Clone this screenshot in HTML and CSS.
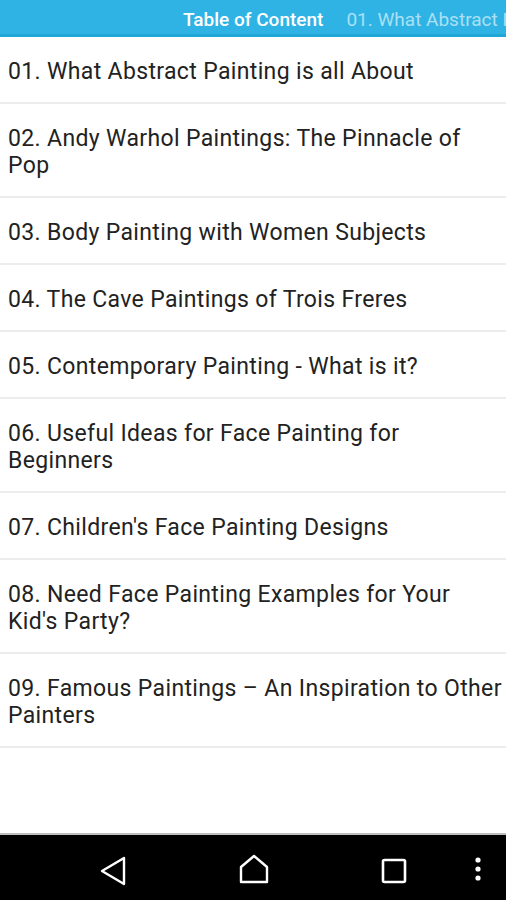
FILE: index.html
```html
<!DOCTYPE html>
<html>
<head>
<meta charset="utf-8">
<link rel="stylesheet" href="styles.css">
</head>
<body>
<div class="app">
  <header class="tabs">
    <span class="tab active">Table of Content</span>
    <span class="tab">01. What Abstract Painting is all About</span>
  </header>
  <ul class="list">
    <li>01. What Abstract Painting is all About</li>
    <li>02. Andy Warhol Paintings: The Pinnacle of Pop</li>
    <li>03. Body Painting with Women Subjects</li>
    <li>04. The Cave Paintings of Trois Freres</li>
    <li>05. Contemporary Painting - What is it?</li>
    <li>06. Useful Ideas for Face Painting for Beginners</li>
    <li>07. Children's Face Painting Designs</li>
    <li>08. Need Face Painting Examples for Your Kid's Party?</li>
    <li>09. Famous Paintings – An Inspiration to Other Painters</li>
  </ul>
  <nav class="navbar">
    <svg class="nav-icon back" width="28" height="30" viewBox="0 0 28 30"><path d="M25 2 L3 15 L25 28 Z" fill="none" stroke="#fff" stroke-width="2.4" stroke-linejoin="round"/></svg>
    <svg class="nav-icon home" width="30" height="30" viewBox="0 0 30 30"><path d="M2 13 L15 2 L28 13 V28 H2 Z" fill="none" stroke="#fff" stroke-width="2.4" stroke-linejoin="round"/></svg>
    <svg class="nav-icon recent" width="26" height="26" viewBox="0 0 26 26"><rect x="2" y="2" width="22" height="22" rx="1.5" fill="none" stroke="#fff" stroke-width="2.6"/></svg>
    <svg class="nav-icon menu" width="8" height="26" viewBox="0 0 8 26"><circle cx="4" cy="3" r="2.6" fill="#fff"/><circle cx="4" cy="12" r="2.6" fill="#fff"/><circle cx="4" cy="21" r="2.6" fill="#fff"/></svg>
  </nav>
</div>
</body>
</html>
```
FILE: styles.css
```css
* { box-sizing: border-box; }
html, body { margin: 0; padding: 0; }
body {
  width: 506px;
  height: 900px;
  overflow: hidden;
  background: #fff;
  font-family: Roboto, "Noto Sans", sans-serif;
}
.app {
  display: flex;
  flex-direction: column;
  height: 900px;
}
.tabs {
  height: 37px;
  background: #2eb3e4;
  border-bottom: 3px solid #21a6d8;
  display: flex;
  align-items: center;
  gap: 23px;
  padding-left: 183px;
  white-space: nowrap;
  overflow: hidden;
  flex-shrink: 0;
}
.tab {
  font-size: 19px;
  color: rgba(255,255,255,0.6);
  font-weight: 400;
  padding-top: 4px;
  flex-shrink: 0;
}
.tab.active {
  color: #fff;
  font-weight: 500;
}
.list {
  list-style: none;
  margin: 0;
  padding: 0;
  flex: 1;
}
.list li {
  font-size: 23px;
  letter-spacing: 0.35px;
  line-height: 27px;
  color: #222;
  padding: 21px 0 17px 8px;
  border-bottom: 2px solid #ededed;
}
.navbar {
  height: 67px;
  flex-shrink: 0;
  background: #000;
  border-top: 2px solid #bdbdbd;
  position: relative;
}
.nav-icon { position: absolute; }
.back { left: 99px; top: 21px; }
.home { left: 239px; top: 19px; }
.recent { left: 381px; top: 23px; }
.menu { left: 474px; top: 22px; }
```
